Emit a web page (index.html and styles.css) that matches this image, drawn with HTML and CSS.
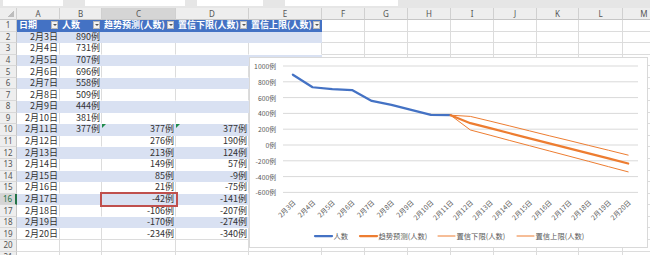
FILE: index.html
```html
<!DOCTYPE html>
<html lang="zh-CN">
<head>
    <meta charset="UTF-8">
    <meta name="viewport" content="width=device-width, initial-scale=1.0">
    <title>趋势预测</title>
    <link rel="stylesheet" href="styles.css">
</head>
<body>
    <div class="toolbar">
        <span class="name-box"></span>
        <span class="fx-box"></span>
        <span class="fx-box2"></span>
        <span class="formula"></span>
    </div>
    <div class="sheet">
        <table class="grid">
            <colgroup>
                <col style="width:17px"><col style="width:43px"><col style="width:42px"><col style="width:74px">
                <col style="width:73px"><col style="width:73px"><col style="width:43px"><col style="width:43px">
                <col style="width:43px"><col style="width:43px"><col style="width:43px"><col style="width:42px">
                <col style="width:44px"><col style="width:43px">
            </colgroup>
            <thead>
                <tr class="colhead"><th class="corner"></th><th>A</th><th>B</th><th class="sel">C</th><th>D</th><th>E</th><th>F</th><th>G</th><th>H</th><th>I</th><th>J</th><th>K</th><th>L</th><th>M</th></tr>
            </thead>
            <tbody>
                <tr class="tblhead"><th>1</th><td><div class="hd">日期<i class="filter"></i></div></td><td><div class="hd">人数<i class="filter"></i></div></td><td><div class="hd">趋势预测(人数)<i class="filter"></i></div></td><td><div class="hd">置信下限(人数)<i class="filter"></i></div></td><td><div class="hd">置信上限(人数)<i class="filter"></i></div></td><td></td><td></td><td></td><td></td><td></td><td></td><td></td><td></td></tr>
                <tr class="band"><th>2</th><td>2月3日</td><td>890例</td><td></td><td></td><td></td><td></td><td></td><td></td><td></td><td></td><td></td><td></td><td></td></tr>
                <tr class="plain"><th>3</th><td>2月4日</td><td>731例</td><td></td><td></td><td></td><td></td><td></td><td></td><td></td><td></td><td></td><td></td><td></td></tr>
                <tr class="band"><th>4</th><td>2月5日</td><td>707例</td><td></td><td></td><td></td><td></td><td></td><td></td><td></td><td></td><td></td><td></td><td></td></tr>
                <tr class="plain"><th>5</th><td>2月6日</td><td>696例</td><td></td><td></td><td></td><td></td><td></td><td></td><td></td><td></td><td></td><td></td><td></td></tr>
                <tr class="band"><th>6</th><td>2月7日</td><td>558例</td><td></td><td></td><td></td><td></td><td></td><td></td><td></td><td></td><td></td><td></td><td></td></tr>
                <tr class="plain"><th>7</th><td>2月8日</td><td>509例</td><td></td><td></td><td></td><td></td><td></td><td></td><td></td><td></td><td></td><td></td><td></td></tr>
                <tr class="band"><th>8</th><td>2月9日</td><td>444例</td><td></td><td></td><td></td><td></td><td></td><td></td><td></td><td></td><td></td><td></td><td></td></tr>
                <tr class="plain"><th>9</th><td>2月10日</td><td>381例</td><td></td><td></td><td></td><td></td><td></td><td></td><td></td><td></td><td></td><td></td><td></td></tr>
                <tr class="band"><th>10</th><td>2月11日</td><td>377例</td><td class="warn">377例</td><td class="warn">377例</td><td>377例</td><td></td><td></td><td></td><td></td><td></td><td></td><td></td><td></td></tr>
                <tr class="plain"><th>11</th><td>2月12日</td><td></td><td>276例</td><td>190例</td><td>362例</td><td></td><td></td><td></td><td></td><td></td><td></td><td></td><td></td></tr>
                <tr class="band"><th>12</th><td>2月13日</td><td></td><td>213例</td><td>124例</td><td>302例</td><td></td><td></td><td></td><td></td><td></td><td></td><td></td><td></td></tr>
                <tr class="plain"><th>13</th><td>2月14日</td><td></td><td>149例</td><td>57例</td><td>241例</td><td></td><td></td><td></td><td></td><td></td><td></td><td></td><td></td></tr>
                <tr class="band"><th>14</th><td>2月15日</td><td></td><td>85例</td><td>-9例</td><td>179例</td><td></td><td></td><td></td><td></td><td></td><td></td><td></td><td></td></tr>
                <tr class="plain"><th>15</th><td>2月16日</td><td></td><td>21例</td><td>-75例</td><td>117例</td><td></td><td></td><td></td><td></td><td></td><td></td><td></td><td></td></tr>
                <tr class="band"><th class="cur">16</th><td>2月17日</td><td></td><td class="picked">-42例</td><td>-141例</td><td>57例</td><td></td><td></td><td></td><td></td><td></td><td></td><td></td><td></td></tr>
                <tr class="plain"><th>17</th><td>2月18日</td><td></td><td>-106例</td><td>-207例</td><td>-5例</td><td></td><td></td><td></td><td></td><td></td><td></td><td></td><td></td></tr>
                <tr class="band"><th>18</th><td>2月19日</td><td></td><td>-170例</td><td>-274例</td><td>-66例</td><td></td><td></td><td></td><td></td><td></td><td></td><td></td><td></td></tr>
                <tr><th>19</th><td>2月20日</td><td></td><td>-234例</td><td>-340例</td><td>-128例</td><td></td><td></td><td></td><td></td><td></td><td></td><td></td><td></td></tr>
                <tr><th>20</th><td></td><td></td><td></td><td></td><td></td><td></td><td></td><td></td><td></td><td></td><td></td><td></td><td></td></tr>
                <tr><th>21</th><td></td><td></td><td></td><td></td><td></td><td></td><td></td><td></td><td></td><td></td><td></td><td></td><td></td></tr>
            </tbody>
        </table>

        <!-- chart object floats over the cells -->
        <div class="chart">
            <svg width="399" height="191" viewBox="0 0 399 191">
                <rect x="0.5" y="0.5" width="398" height="190" fill="#fff" stroke="#d9d9d9"/>
                <g class="gridlines">
                    <line x1="34" x2="389" y1="9" y2="9"/>
                    <line x1="34" x2="389" y1="24.8" y2="24.8"/>
                    <line x1="34" x2="389" y1="40.6" y2="40.6"/>
                    <line x1="34" x2="389" y1="56.4" y2="56.4"/>
                    <line x1="34" x2="389" y1="72.2" y2="72.2"/>
                    <line x1="34" x2="389" y1="88" y2="88"/>
                    <line x1="34" x2="389" y1="103.8" y2="103.8"/>
                    <line x1="34" x2="389" y1="119.6" y2="119.6"/>
                    <line x1="34" x2="389" y1="135.4" y2="135.4"/>
                </g>
                <g class="ylabels">
                    <text x="27" y="9">1000例</text>
                    <text x="27" y="24.8">800例</text>
                    <text x="27" y="40.6">600例</text>
                    <text x="27" y="56.4">400例</text>
                    <text x="27" y="72.2">200例</text>
                    <text x="27" y="88">0例</text>
                    <text x="27" y="103.8">-200例</text>
                    <text x="27" y="119.6">-400例</text>
                    <text x="27" y="135.4">-600例</text>
                </g>
                <g class="xlabels">
                    <text transform="translate(45 144) rotate(-45)">2月3日</text>
                    <text transform="translate(64.6 144) rotate(-45)">2月4日</text>
                    <text transform="translate(84.3 144) rotate(-45)">2月5日</text>
                    <text transform="translate(104 144) rotate(-45)">2月6日</text>
                    <text transform="translate(123.8 144) rotate(-45)">2月7日</text>
                    <text transform="translate(143.5 144) rotate(-45)">2月8日</text>
                    <text transform="translate(163.2 144) rotate(-45)">2月9日</text>
                    <text transform="translate(182.9 144) rotate(-45)">2月10日</text>
                    <text transform="translate(202.6 144) rotate(-45)">2月11日</text>
                    <text transform="translate(222.4 144) rotate(-45)">2月12日</text>
                    <text transform="translate(242.1 144) rotate(-45)">2月13日</text>
                    <text transform="translate(261.8 144) rotate(-45)">2月14日</text>
                    <text transform="translate(281.5 144) rotate(-45)">2月15日</text>
                    <text transform="translate(301.3 144) rotate(-45)">2月16日</text>
                    <text transform="translate(321 144) rotate(-45)">2月17日</text>
                    <text transform="translate(340.7 144) rotate(-45)">2月18日</text>
                    <text transform="translate(360.4 144) rotate(-45)">2月19日</text>
                    <text transform="translate(380.1 144) rotate(-45)">2月20日</text>
                </g>
                <polyline class="s-count" points="43.86,17.69 63.58,30.25 83.31,32.15 103.03,33.02 122.75,43.92 142.47,47.79 162.19,52.92 181.92,57.9 201.64,58.22"/>
                <polyline class="s-trend" points="201.64,58.22 221.36,66.2 241.08,71.17 260.81,76.23 280.53,81.29 300.25,86.34 319.97,91.32 339.69,96.37 359.42,101.43 379.14,106.49"/>
                <polyline class="s-bound" points="201.64,58.22 221.36,72.99 241.08,78.2 260.81,83.5 280.53,88.71 300.25,93.93 319.97,99.14 339.69,104.35 359.42,109.65 379.14,114.86"/>
                <polyline class="s-bound" points="201.64,58.22 221.36,59.4 241.08,64.14 260.81,68.96 280.53,73.86 300.25,78.76 319.97,83.5 339.69,88.4 359.42,93.21 379.14,98.11"/>
                <g class="legend">
                    <line class="s-count" x1="66" x2="83" y1="179" y2="179"/>
                    <text x="84.5" y="179">人数</text>
                    <line class="s-trend" x1="111" x2="128" y1="179" y2="179"/>
                    <text x="129.5" y="179">趋势预测(人数)</text>
                    <line class="s-bound" x1="189" x2="206" y1="179" y2="179"/>
                    <text x="207.5" y="179">置信下限(人数)</text>
                    <line class="s-bound" x1="268" x2="285" y1="179" y2="179"/>
                    <text x="286.5" y="179">置信上限(人数)</text>
                </g>
            </svg>
        </div>
    </div>
</body>
</html>
```

FILE: styles.css
```css
/* page */
html, body {
    margin: 0;
    padding: 0;
    overflow: hidden;
}

body {
    width: 650px;
    height: 255px;
    background: #fff;
    color: #333;
    font-family: "Noto Sans CJK SC", "Noto Sans", sans-serif;
}

/* formula bar strip */
.toolbar {
    display: flex;
    height: 8px;
    background: #e6e6e6;
}

.toolbar span {
    height: 6px;
    background: #fff;
}

.name-box { margin-left: 3px; width: 60px; }
.fx-box { margin-left: 22px; width: 100px; }
.fx-box2 { margin-left: 12px; width: 66px; }
.formula { margin-left: 22px; width: 113px; }

/* worksheet */
.sheet {
    position: relative;
}

.grid {
    border-collapse: separate;
    border-spacing: 0;
    table-layout: fixed;
    width: 666px;
}

.grid th, .grid td {
    padding: 0;
    border: 0;
    border-right: 1px solid #dcdcdc;
    border-bottom: 1px solid #dcdcdc;
    white-space: nowrap;
    font-size: 9px;
    line-height: 10px;
}

.grid tbody tr {
    height: 11.58px;
}

.grid td {
    text-align: right;
    padding-right: 1px;
}

.colhead th {
    height: 11px;
    background: #eeeeee;
    color: #555;
    font-family: "Noto Sans", sans-serif;
    font-size: 8px;
    font-weight: normal;
    text-align: center;
    border-right-color: #d0d0d0;
    border-bottom-color: #c6c6c6;
}

.colhead th.sel {
    background: #d5d5d5;
}

.colhead th.corner {
    background: #eeeeee linear-gradient(to bottom right, transparent 50%, #bdbdbd 50%) no-repeat right 2px bottom 2px / 6px 6px;
}

.grid tbody th {
    background: #eeeeee;
    color: #555;
    font-family: "Noto Sans", sans-serif;
    font-size: 8px;
    font-weight: normal;
    text-align: center;
    border-right-color: #c6c6c6;
    border-bottom-color: #d8d8d8;
}

.grid tbody th.cur {
    background: #d5d5d5;
    color: #217346;
    border-right: 2px solid #217346;
}

/* table object A1:E19 */
.tblhead td:nth-child(-n+6) {
    background: #4472c4;
    border-color: transparent;
    color: #fff;
    font-weight: bold;
    padding: 0;
}

.band td:nth-child(-n+6) {
    background: #d9e1f2;
    border-color: transparent;
}

.plain td:nth-child(-n+6) {
    border-bottom-color: transparent;
}

.hd {
    display: flex;
    align-items: center;
    justify-content: space-between;
    padding: 0 1px 0 2px;
    text-align: left;
}

.filter {
    display: flex;
    flex: none;
    align-items: center;
    justify-content: center;
    box-sizing: border-box;
    width: 7px;
    height: 8px;
    background: #f3f3f3;
    border: 1px solid #b9b9b9;
}

.filter::after {
    content: "";
    border-left: 2px solid transparent;
    border-right: 2px solid transparent;
    border-top: 2px solid #555;
}

td.warn {
    position: relative;
}

td.warn::before {
    content: "";
    position: absolute;
    left: 0;
    top: 0;
    border-top: 4px solid #1f8b4c;
    border-right: 4px solid transparent;
}

td.picked {
    outline: 2px solid #c0504d;
}

/* chart */
.chart {
    position: absolute;
    left: 249px;
    top: 49px;
    width: 399px;
    height: 191px;
}

.chart svg {
    display: block;
}

.chart text {
    font-family: "Noto Sans CJK SC", sans-serif;
    fill: #595959;
    dominant-baseline: central;
}

.gridlines line {
    stroke: #d9d9d9;
    stroke-width: 1;
}

.ylabels text {
    font-size: 6.8px;
    text-anchor: end;
}

.xlabels text {
    font-size: 6.8px;
    text-anchor: end;
}

.legend text {
    font-size: 7.3px;
}

.s-count, .s-trend, .s-bound {
    fill: none;
    stroke-linejoin: round;
    stroke-linecap: round;
}

.s-count {
    stroke: #4472c4;
    stroke-width: 2.25;
}

.s-trend {
    stroke: #ed7d31;
    stroke-width: 2.25;
}

.s-bound {
    stroke: #ed7d31;
    stroke-width: 1;
}
```
